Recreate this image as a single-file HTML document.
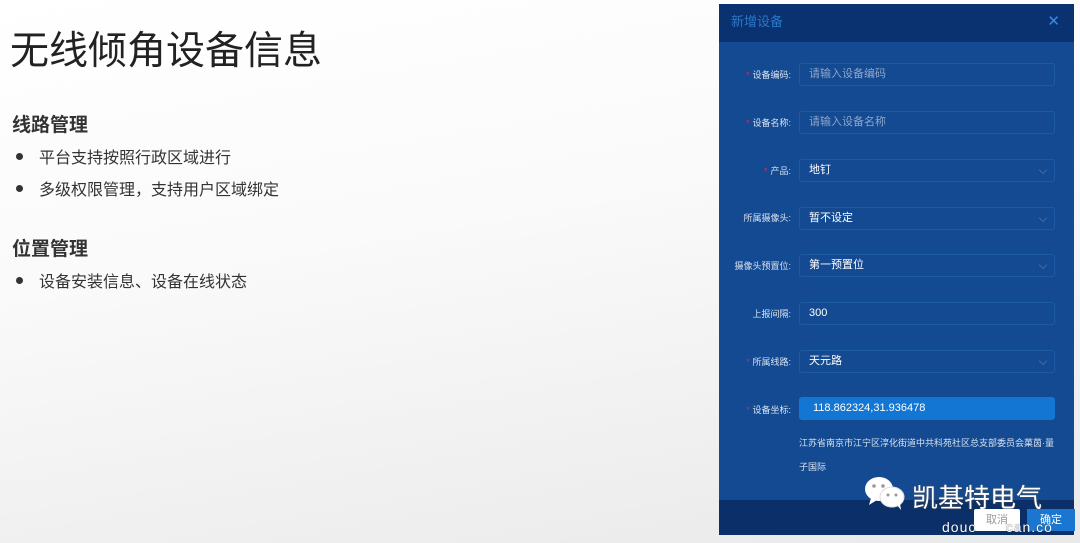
<!DOCTYPE html><html><head><meta charset="utf-8"><style>
body{margin:0;width:1080px;height:543px;overflow:hidden;position:relative;font-family:"Liberation Sans","Noto Sans CJK SC",sans-serif;background:linear-gradient(170deg,#fff 0%,#fafafa 40%,#e9e9e9 100%);}
.t{position:absolute;left:10px;top:20px;font-size:39px;color:#222;}
.h{position:absolute;left:12px;font-size:19px;font-weight:bold;color:#333;}
.li{position:absolute;left:16px;font-size:16px;color:#333;}
.li:before{content:"";display:inline-block;width:7px;height:7px;border-radius:50%;background:#333;margin-right:16px;vertical-align:middle;position:relative;top:-2px}
.dlg{position:absolute;left:719px;top:4px;width:355px;height:531px;background:#134a92;}
.hd{height:38px;background:#0b3270;color:#2a78c8;font-size:13px;line-height:36px;padding-left:12px;position:relative}
.x{position:absolute;right:14px;top:0;color:#3a8ae0;font-size:15px}
.lab{position:absolute;right:283px;font-size:9px;color:#d8e2f0;white-space:nowrap}
.lab b{color:#d0304a;font-weight:normal;margin-right:3px}
.in{position:absolute;left:80px;width:256px;height:23px;border:1px solid #1d5aa6;border-radius:3px;box-sizing:border-box;font-size:11px;color:#fff;line-height:21px;padding-left:9px}
.ph{color:#8fa6c8}
.ar{position:absolute;right:8px;top:7px;width:5px;height:5px;border-right:1px solid #3a6aa8;border-bottom:1px solid #3a6aa8;transform:rotate(45deg)}
.ft{position:absolute;left:0;bottom:0;width:355px;height:35px;background:#0b2f68}
</style></head><body>
<div class="t">无线倾角设备信息</div>
<div class="h" style="top:110px">线路管理</div>
<div class="li" style="top:144px">平台支持按照行政区域进行</div>
<div class="li" style="top:176px">多级权限管理，支持用户区域绑定</div>
<div class="h" style="top:234px">位置管理</div>
<div class="li" style="top:268px">设备安装信息、设备在线状态</div>
<div class="dlg">
<div class="hd">新增设备<span class="x">✕</span></div>
<div class="lab" style="top:64px"><b>*</b>设备编码:</div><div class="in" style="top:59px"><span class="ph">请输入设备编码</span></div>
<div class="lab" style="top:112px"><b>*</b>设备名称:</div><div class="in" style="top:107px"><span class="ph">请输入设备名称</span></div>
<div class="lab" style="top:160px"><b>*</b>产品:</div><div class="in" style="top:155px">地钉<i class="ar"></i></div>
<div class="lab" style="top:207px">所属摄像头:</div><div class="in" style="top:203px">暂不设定<i class="ar"></i></div>
<div class="lab" style="top:255px">摄像头预置位:</div><div class="in" style="top:250px">第一预置位<i class="ar"></i></div>
<div class="lab" style="top:303px">上报间隔:</div><div class="in" style="top:298px">300</div>
<div class="lab" style="top:351px"><b>*</b>所属线路:</div><div class="in" style="top:346px">天元路<i class="ar"></i></div>
<div class="lab" style="top:399px"><b>*</b>设备坐标:</div><div class="in" style="top:393px;background:#1276d2;border-color:#1276d2;padding-left:13px">118.862324,31.936478</div>
<div style="position:absolute;left:80px;top:427px;font-size:9px;color:#d8e2f0;line-height:24px;width:260px">江苏省南京市江宁区淳化街道中共科苑社区总支部委员会菓茵·量子国际</div>
<div class="ft"></div>
</div>
<svg style="position:absolute;left:863px;top:475px" width="46" height="36" viewBox="0 0 46 36">
<ellipse cx="16" cy="14" rx="14" ry="12" fill="#fff"/><path d="M8 23 L6 30 L14 25Z" fill="#fff"/>
<circle cx="11" cy="11" r="1.8" fill="#999"/><circle cx="20" cy="11" r="1.8" fill="#999"/>
<ellipse cx="29" cy="22" rx="12" ry="10" fill="#fff" stroke="#ddd"/><path d="M34 30 L38 35 L37 28Z" fill="#fff"/>
<circle cx="25" cy="20" r="1.5" fill="#999"/><circle cx="33" cy="20" r="1.5" fill="#999"/>
</svg>
<div style="position:absolute;left:912px;top:478px;font-size:26px;color:#fff;text-shadow:0 0 2px #555">凯基特电气</div>
<div style="position:absolute;left:974px;top:509px;width:46px;height:22px;background:#fff;border-radius:2px;color:#999;font-size:11px;text-align:center;line-height:22px">取消</div>
<div style="position:absolute;left:1027px;top:509px;width:48px;height:22px;background:#1a76d0;color:#fff;font-size:11px;text-align:center;line-height:22px">确定</div>
<div style="position:absolute;left:942px;top:519px;font-size:14px;color:#fff;letter-spacing:1px;text-shadow:0 0 1px #000">douc&nbsp;&nbsp;&nbsp;&nbsp;&nbsp;&nbsp;can.co</div>
</body></html>
